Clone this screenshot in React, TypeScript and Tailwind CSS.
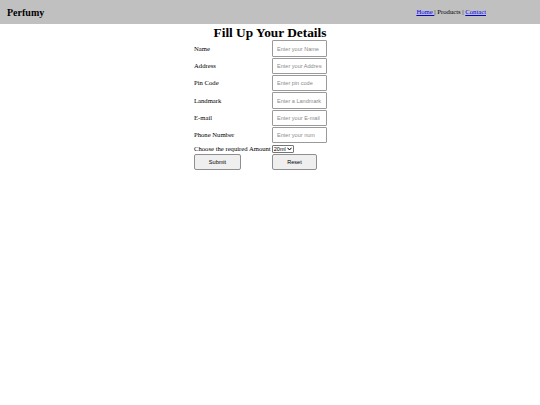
import React from "react";

const serif = { fontFamily: '"Liberation Serif", "Times New Roman", serif' };
const sans = { fontFamily: '"Liberation Sans", Arial, sans-serif' };

const rows = [
  ["Name", "Enter your Name"],
  ["Address", "Enter your Address"],
  ["Pin Code", "Enter pin code"],
  ["Landmark", "Enter a Landmark"],
  ["E-mail", "Enter your E-mail"],
  ["Phone Number", "Enter your num"],
];

export default function App() {
  return (
    <div className="w-[540px] h-[405px] bg-white text-black" style={serif}>
      <div className="h-[24px] bg-[#c0c0c0] flex items-center justify-between pl-[7px] pr-[54px]">
        <span className="text-[10px] font-bold">Perfumy</span>
        <span className="text-[6.67px]">
          <a href="#" className="text-[#0000ee] underline">Home </a>| Products |{" "}
          <a href="#" className="text-[#0000ee] underline">Contact</a>
        </span>
      </div>
      <h1 className="text-[13.33px] font-bold text-center leading-[15px] mt-[1px]">Fill Up Your Details</h1>
      <div className="ml-[194px] text-[6.67px] flex flex-col">
        {rows.map(([label, ph]) => (
          <div key={label} className="flex items-center h-[17.3px]">
            <span className="w-[78px]">{label}</span>
            <input
              placeholder={ph}
              className="w-[55px] h-[16.5px] border border-[#9a9a9a] rounded-[1px] px-[4px] text-[5.55px] placeholder:text-[#8a8a8a] outline-none"
              style={sans}
            />
          </div>
        ))}
        <div className="flex items-center h-[9px] mt-[0.5px]">
          <span>Choose the required Amount</span>
          <span
            className="ml-[1px] h-[8px] w-[22px] border border-[#767676] rounded-[1px] text-[5.55px] flex items-center justify-between px-[1px]"
            style={sans}
          >
            20ml
            <svg width="5" height="4" viewBox="0 0 10 8">
              <path d="M1 1.5 L5 6 L9 1.5" fill="none" stroke="#000" strokeWidth="2" />
            </svg>
          </span>
        </div>
        <div className="flex items-start mt-[1px]">
          <div className="w-[78px]">
            <button
              className="w-[47px] h-[16px] bg-[#efefef] border border-[#8f8f8f] rounded-[2px] text-[5.55px]"
              style={sans}
            >
              Submit
            </button>
          </div>
          <button
            className="w-[45px] h-[16px] bg-[#efefef] border border-[#8f8f8f] rounded-[2px] text-[5.55px]"
            style={sans}
          >
            Reset
          </button>
        </div>
      </div>
    </div>
  );
}
